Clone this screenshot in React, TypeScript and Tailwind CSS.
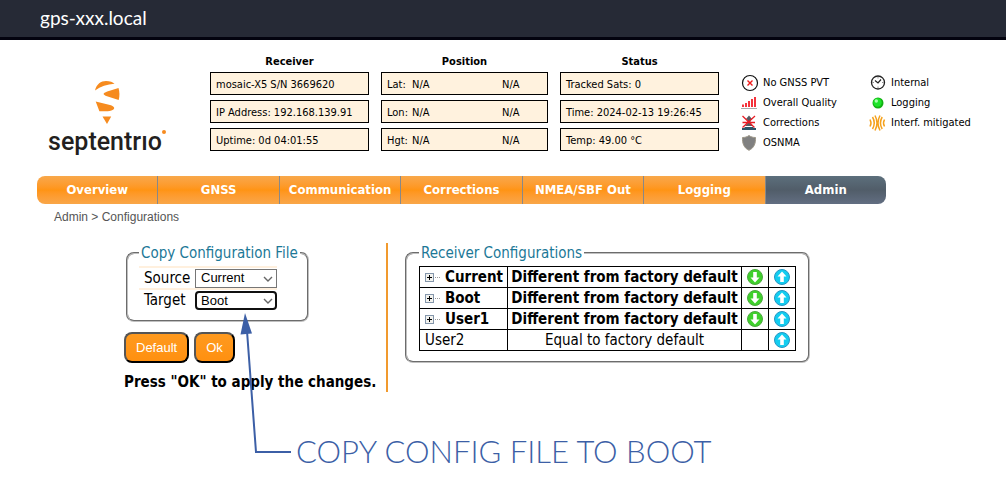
import { ReactNode, useState } from "react";

const infoColumns: { title: string; rows: string[][] }[] = [
  {
    title: "Receiver",
    rows: [
      ["mosaic-X5 S/N 3669620"],
      ["IP Address: 192.168.139.91"],
      ["Uptime: 0d 04:01:55"],
    ],
  },
  {
    title: "Position",
    rows: [
      ["Lat:", "N/A", "N/A"],
      ["Lon:", "N/A", "N/A"],
      ["Hgt:", "N/A", "N/A"],
    ],
  },
  {
    title: "Status",
    rows: [
      ["Tracked Sats: 0"],
      ["Time: 2024-02-13 19:26:45"],
      ["Temp: 49.00 °C"],
    ],
  },
];

const navItems = [
  "Overview",
  "GNSS",
  "Communication",
  "Corrections",
  "NMEA/SBF Out",
  "Logging",
  "Admin",
];

const configurations = [
  { name: "Current", changed: true },
  { name: "Boot", changed: true },
  { name: "User1", changed: true },
  { name: "User2", changed: false },
];

const configNames = configurations.map((c) => c.name);

const Logo = () => (
  <div className="flex w-[118px] flex-col items-center">
    <svg width="26" height="46" viewBox="0 0 26 46" fill="#f68b1f">
      <path d="M1 10.500C2.500 4 7 1 12 1c4 0 7 1.200 8.500 2.700C13 4 6.500 6.500 1 10.500Z" />
      <path d="M24.500 8c1.200 4 1.200 8 .2 12L13 16.200c-4.500-1.500-4.500-3 .2-4.700Z" />
      <path d="M1.700 21.500 17 25.300c4.500 1.700 4 4.200.4 5.200-3.500 1-8 1-12 .7Z" />
      <path d="M8.500 36.500h8.700L13 44Z" />
    </svg>
    <div className="flex font-['Roboto',sans-serif] text-[25px] leading-8 font-medium text-[#231f20]">
      septentrıo
      <span className="mt-1 h-1 w-1 rounded-full bg-[#f68b1f]" />
    </div>
  </div>
);

const PvtIcon = () => (
  <svg width="18" height="18" viewBox="0 0 18 18" fill="none">
    <circle cx="9" cy="9" r="7.500" stroke="#111" strokeWidth="1.200" />
    <path d="m6.500 6.500 5 5m0-5-5 5" stroke="#f01818" strokeWidth="1.400" />
  </svg>
);

const QualityIcon = () => (
  <svg width="18" height="18" viewBox="0 0 18 18">
    <path d="M1 10.500h2V13H1zM4 9h2v4H4zM7 7h2v6H7zM10 5h2v8h-2zM13 3h2v10h-2z" fill="#f4333c" />
    <path d="M0 14.500h16" stroke="#aaa" />
  </svg>
);

const CorrectionsIcon = () => (
  <svg width="18" height="18" viewBox="0 0 18 18" fill="none">
    <path d="M8 1.500 5 5l1.500 1v3L4 12h8L9.500 9V6L11 5Z" fill="#555b63" />
    <path d="M3.500 13h9v1H15v2H1v-2h2.500Z" fill="#2b5468" />
    <path d="m1.500 2 12 11.500M14 2 1.500 13.500M1.500 8.500H14" stroke="#e81c24" strokeWidth="1.300" />
  </svg>
);

const ShieldIcon = () => (
  <svg width="18" height="18" viewBox="0 0 18 18">
    <path d="M8 1.500C10 3 12 3.500 14.500 3.500c.3 6-1.500 10.500-6.500 12.800C3 14 1.200 9.500 1.500 3.500c2.500 0 4.500-.5 6.500-2Z" fill="#808080" stroke="#9d9788" />
  </svg>
);

const ClockIcon = () => (
  <svg width="18" height="18" viewBox="0 0 18 18" fill="none" stroke="#222">
    <circle cx="9" cy="8.500" r="6.500" strokeWidth="1.300" />
    <path d="M6 6.500 9 9l3-3.500" strokeWidth="1.200" />
    <path d="M9 3v1.500M9 12.500V14M3.500 8.500H5M13 8.500h1.500" strokeWidth=".5" />
  </svg>
);

const LedIcon = () => (
  <svg width="18" height="18" viewBox="0 0 18 18">
    <circle cx="9" cy="9" r="5.500" fill="#12b012" />
    <circle cx="8.500" cy="8.500" r="4.200" fill="#1ee32a" />
    <circle cx="7.300" cy="7" r="1.700" fill="#a9ffad" />
  </svg>
);

const InterferenceIcon = () => (
  <svg width="18" height="18" viewBox="0 0 18 18" fill="none" stroke="#f5a11c" strokeWidth="1.500">
    <path d="M1 5.500q2 3.500 0 7M3.500 3q3.500 6 0 12M6 1.500q4 7.500 0 15M15.500 5.500q-2 3.500 0 7M13.200 3q-3.500 6 0 12M11 1.500q-4 7.500 0 15" />
  </svg>
);

const RoundArrow = ({ up }: { up?: boolean }) => (
  <svg width="18" height="18" viewBox="0 0 18 18" className="block">
    <circle cx="9" cy="9" r="7.500" fill={up ? "#12cdf0" : "#3fd02c"} stroke={up ? "#2596c4" : "#4ca83e"} />
    <path
      d={up ? "M9 3.500 13.500 8.500H10.800V14H7.200V8.500H4.500Z" : "M9 14.500 4.500 9.500H7.200V4h3.600v5.500h2.700Z"}
      fill="#fff"
    />
  </svg>
);

const ExpandIcon = () => (
  <svg width="16" height="11" viewBox="0 0 16 11" fill="none">
    <rect x=".5" y="1.500" width="8" height="8" fill="#f2f2ee" stroke="#8496ab" />
    <path d="M2 5.500h5M4.500 3v5" stroke="#000" />
    <path d="M10 5.500h5" stroke="#999" strokeDasharray="1 1" />
  </svg>
);

const StatusItem = ({ icon, label }: { icon: ReactNode; label: string }) => (
  <li className="flex h-5 items-center gap-1">
    {icon}
    <span className="leading-[22px]">{label}</span>
  </li>
);

const SelectRow = ({
  id,
  label,
  value,
  onChange,
  className,
}: {
  id: string;
  label: string;
  value: string;
  onChange: (value: string) => void;
  className: string;
}) => (
  <div className="flex h-[22px] w-[138px] items-center border-t-2 border-[#fff0de] pl-[5px]">
    <label htmlFor={id} className="w-[51px]">
      {label}
    </label>
    <div className="relative flex-1">
      <select
        id={id}
        value={value}
        onChange={(e) => onChange(e.target.value)}
        className={`block h-[19px] w-full appearance-none bg-white font-['Liberation_Sans',sans-serif] text-[13px] leading-4 outline-none ${className}`}>
        {configNames.map((name) => (
          <option key={name}>{name}</option>
        ))}
      </select>
      <svg
        width="10"
        height="6"
        viewBox="0 0 10 6"
        fill="none"
        stroke="#666"
        strokeWidth="1.400"
        className="pointer-events-none absolute top-[7px] right-1">
        <path d="m1 1 4 4 4-4" />
      </svg>
    </div>
  </div>
);

const ActionButton = ({ children }: { children: ReactNode }) => (
  <button
    type="button"
    className="h-[31px] rounded-lg border-2 border-t-[#555] border-r-black border-b-black border-l-[#555] bg-linear-to-b from-[#ff9a1e] to-[#ff9010] px-[10px] font-['Liberation_Sans',sans-serif] text-[13px] text-white">
    {children}
  </button>
);

const App = () => {
  const [source, setSource] = useState("Current");
  const [target, setTarget] = useState("Boot");

  return (
    <div className="min-h-screen bg-white font-['DejaVu_Sans_Condensed','DejaVu_Sans',sans-serif] text-black">
      <div className="h-10 border-b-3 border-[#03030f] bg-[#262a36] pl-10 font-['Lato',sans-serif] text-[19px] leading-9 text-white">
        gps-xxx.local
      </div>

      <header className="flex pt-3 pl-12 text-[11px]">
        <div className="w-[162px] pt-7">
          <Logo />
        </div>
        <div className="grid grid-cols-[159px_167px_159px] gap-3">
          {infoColumns.map((column) => (
            <section key={column.title} className="flex flex-col gap-[5px]">
              <h2 className="h-[15px] text-center leading-5 font-bold">{column.title}</h2>
              {column.rows.map((row) => (
                <div
                  key={row[0]}
                  className="flex h-[23px] border border-black bg-[#fff2de] pl-[5px] leading-[23px]">
                  {row.length === 1 ? (
                    row[0]
                  ) : (
                    <>
                      <span className="w-[25px]">{row[0]}</span>
                      <span className="w-[90px]">{row[1]}</span>
                      <span>{row[2]}</span>
                    </>
                  )}
                </div>
              ))}
            </section>
          ))}
        </div>
        <div className="flex pt-[21px] pl-[22px]">
          <ul className="w-32">
            <StatusItem icon={<PvtIcon />} label="No GNSS PVT" />
            <StatusItem icon={<QualityIcon />} label="Overall Quality" />
            <StatusItem icon={<CorrectionsIcon />} label="Corrections" />
            <StatusItem icon={<ShieldIcon />} label="OSNMA" />
          </ul>
          <ul>
            <StatusItem icon={<ClockIcon />} label="Internal" />
            <StatusItem icon={<LedIcon />} label="Logging" />
            <StatusItem icon={<InterferenceIcon />} label="Interf. mitigated" />
          </ul>
        </div>
      </header>

      <nav className="mt-[18px] mr-[120px] ml-[37px] flex h-7 overflow-hidden rounded-lg text-[13px] leading-7 font-bold text-white">
        {navItems.map((item) => (
          <a
            key={item}
            href="#"
            className={
              item === "Admin"
                ? "flex-1 bg-linear-to-b from-[#5c6f7c] via-[#515d69] to-[#626e82] text-center"
                : "flex-1 border-r border-[#888] bg-linear-to-b from-[#f8a84a] via-[#ff9413] to-[#f9a648] text-center"
            }>
            {item}
          </a>
        ))}
      </nav>

      <p className="mt-1 pl-[54px] font-['Liberation_Sans',sans-serif] text-[12px] leading-[18px] text-[#555]">
        Admin &gt; Configurations
      </p>

      <main className="relative flex pt-[17px] pl-[124px] text-[15px]">
        <form className="w-[262px]">
          <fieldset className="ml-[2px] h-[79px] w-[183px] rounded-lg border-2 border-[#c0c0c0] pl-[11px] [border-style:groove]">
            <legend className="px-[2px] leading-5 text-[#1c7897]">Copy Configuration File</legend>
            <div className="pt-[3px]">
              <SelectRow
                id="source"
                label="Source"
                value={source}
                onChange={setSource}
                className="border border-[#767676] pl-[5px]"
              />
              <SelectRow
                id="target"
                label="Target"
                value={target}
                onChange={setTarget}
                className="rounded-sm border-2 border-[#101010] pl-1"
              />
            </div>
          </fieldset>
          <div className="mt-[10px] flex gap-[5px]">
            <ActionButton>Default</ActionButton>
            <ActionButton>Ok</ActionButton>
          </div>
          <p className="mt-[9px] text-[15px] leading-5 font-bold">Press "OK" to apply the changes.</p>
        </form>

        <div className="w-[2px] bg-[#f19a2e]" />

        <fieldset className="ml-[17px] h-[120px] self-start rounded-lg border-2 border-[#c0c0c0] px-3 [border-style:groove]">
          <legend className="px-[2px] leading-5 text-[#1c7897]">Receiver Configurations</legend>
          <table className="mt-[3px] border-collapse">
            <tbody>
              {configurations.map(({ name, changed }) => (
                <tr key={name} className={changed ? "h-[21px] font-bold" : "h-[21px]"}>
                  <td className="w-[88px] border border-black p-0 pl-[5px] leading-5">
                    {changed ? (
                      <span className="flex items-center gap-1">
                        <button type="button" aria-label={`Expand ${name}`}>
                          <ExpandIcon />
                        </button>
                        {name}
                      </span>
                    ) : (
                      name
                    )}
                  </td>
                  <td className="w-[234px] border border-black p-0 text-center leading-5 whitespace-nowrap">
                    {changed ? "Different from factory default" : "Equal to factory default"}
                  </td>
                  <td className="w-[27px] border border-black p-0 pl-1">
                    {changed && (
                      <button type="button" className="block" aria-label={`Download ${name}`}>
                        <RoundArrow />
                      </button>
                    )}
                  </td>
                  <td className="w-[27px] border border-black p-0 pl-1">
                    <button type="button" className="block" aria-label={`Upload ${name}`}>
                      <RoundArrow up />
                    </button>
                  </td>
                </tr>
              ))}
            </tbody>
          </table>
        </fieldset>

        {/* callout pointing at the target drop-down */}
        <div className="pointer-events-none absolute top-[87px] left-[238px] flex items-end text-[#3c5fa6]">
          <svg width="54" height="142" viewBox="0 0 54 142" fill="none" className="mb-3">
            <path d="m9 18 9 121h35" stroke="currentColor" strokeWidth="2" />
            <path d="M7 0 2.500 21.500 14 20.500Z" fill="currentColor" />
          </svg>
          <p className="ml-1 font-['Lato',sans-serif] text-[31px] leading-8 font-light">
            COPY CONFIG FILE TO BOOT
          </p>
        </div>
      </main>
    </div>
  );
};

export default App;
